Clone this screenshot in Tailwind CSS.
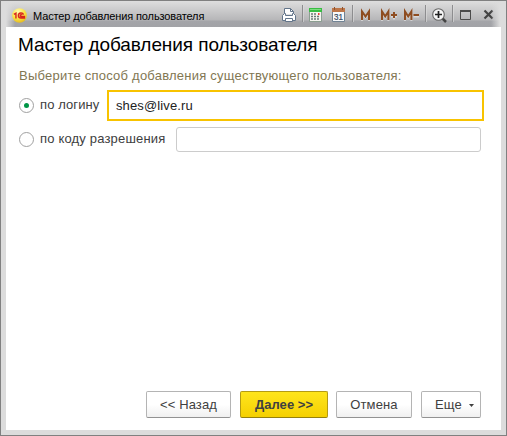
<!DOCTYPE html>
<html lang="ru">
<head>
<meta charset="utf-8">
<title>Мастер добавления пользователя</title>
<script src="https://cdn.jsdelivr.net/npm/@tailwindcss/browser@4"></script>
</head>
<body class="w-[507px] h-[436px] overflow-hidden font-['Liberation_Sans',Arial,sans-serif]">
<div class="w-[507px] h-[436px] border border-[#808080] bg-[#dcdcdc] flex flex-col">
  <header class="h-[26px] shrink-0 flex">
    <div class="w-[14px] bg-linear-to-r from-[#dcdcdc] from-35% to-transparent z-10 -mr-[14px]"></div>
    <div class="flex-1 flex bg-[linear-gradient(to_bottom,#dedede_0,#b6b6b8_19px,#a4a5a9_20px,#a2a3a7_26px)]">
      <svg class="w-[15px] h-[15px] ml-[11px] mt-[7px] shrink-0 relative z-20" viewBox="0 0 16 16">
        <defs><radialGradient id="g" cx=".4" cy=".25" r=".8"><stop offset="0" stop-color="#fffbb0"/><stop offset=".55" stop-color="#fbe447"/><stop offset="1" stop-color="#e2b51c"/></radialGradient></defs>
        <circle cx="8" cy="8" r="7.8" fill="url(#g)"/>
        <path d="M2 6.800 4.200 5.500V11.200M12.300 7C11.700 4.800 6.800 4.600 6.800 8c0 1.900 1.200 2.700 2.800 2.700H14M10.800 7.600C10.200 6.700 8.800 7 8.800 8c0 .7.400 1 1.200 1H14" fill="none" stroke="#d9231c" stroke-width="1.500"/>
      </svg>
      <div class="ml-[6px] mt-[8px] w-[247px] text-[11px] leading-[14px] tracking-[-0.12px] text-black whitespace-nowrap">Мастер добавления пользователя</div>
      <svg class="w-[226px] h-[26px] shrink-0" viewBox="280 1 226 26">
        <g stroke="#8d8d8f"><path d="M302.500 5v17M352.500 5v17M425.500 5v17M452.500 5v17"/></g>
        <g stroke="#dedede" opacity=".6"><path d="M303.500 5v17M353.500 5v17M426.500 5v17M453.500 5v17"/></g>
        <g fill="#fff" stroke="#63758a"><path d="M284.500 14.500V8.500h6l3 3v3"/><path d="M290.500 8.500v3h3" fill="none"/><path d="M282.500 20.500v-5l2-2h1v2h7v-2h1l2 2v5z"/><path d="M285.500 18.500h7v3h-7z"/></g>
        <path d="M310 8h11a1 1 0 0 1 1 1v12a1 1 0 0 1-1 1h-11a1 1 0 0 1-1-1V9a1 1 0 0 1 1-1z" fill="#8b9e91"/><path d="M310 12h11v9h-11z" fill="#f4f5ef"/>
        <path d="M309 8h13v4h-13z" fill="#39bd43"/><path d="M310 9h11v1h-11z" fill="#7ddd80"/>
        <g stroke="#6b7a78" stroke-dasharray="2 1"><path d="M311 14h5M311 16.500h9M311 19h9" stroke-width="1.500"/></g><path d="M318 13h1.500v2H318z" fill="#ef3d34"/>
        <path d="M332.500 9.500h12v12h-12z" fill="#f8f9fa" stroke="#718394"/><path d="M332 8h13v4h-13z" fill="#bd7649"/><path d="M334.500 7v3M342.500 7v3" stroke="#8f532d"/>
        <text x="334" y="20" font-size="9" textLength="9" lengthAdjust="spacingAndGlyphs" fill="#364b60" stroke="#364b60" stroke-width=".2">31</text>
        <g fill="none" stroke="#f0f0f0" opacity=".55" stroke-width="2" transform="translate(0 1)"><path d="M362 20v-8.500l3.500 5 3.500-5V20M382 20v-8.500l3.200 5 3.200-5V20M405 20v-8.500l3.200 5 3.200-5V20M391 15.500h6M394 12.500v6M413.500 15.500h5.500"/></g>
        <g fill="none" stroke="#8e4d21" stroke-width="2"><path d="M362 20v-8.500l3.500 5 3.500-5V20M382 20v-8.500l3.200 5 3.200-5V20M405 20v-8.500l3.200 5 3.200-5V20M391 15h6M394 12v6M413.500 15h5.500"/></g>
        <path d="m442 18 4 4" stroke="#444" stroke-width="2.500"/><circle cx="438.500" cy="14.500" r="5.800" fill="#f5f5f5" stroke="#666" stroke-width="1.100"/><path d="M435 14.500h7M438.500 11v7" stroke="#222" stroke-width="1.700"/>
        <path d="M460.500 11.500h10v8h-10z" fill="none" stroke="#4b4b4b"/><path d="M460 11h11" stroke="#4b4b4b" stroke-width="2"/>
        <path d="m484.500 10.500 8 8m0-8-8 8" stroke="#434343" stroke-width="2.200"/>
      </svg>
    </div>
    <div class="w-[15px] -ml-[15px] bg-linear-to-r from-transparent to-[#dcdcdc] to-60%"></div>
  </header>
  <main class="mx-[5px] mb-[5px] flex-1 bg-white flex flex-col pl-3 pr-[20px]">
    <h1 class="mt-[6px] h-6 leading-6 text-[19px] tracking-[-0.08px] text-black whitespace-nowrap">Мастер добавления пользователя</h1>
    <p class="mt-[11px] ml-px h-4 leading-4 text-[13px] tracking-[0.23px] text-[#827753] whitespace-nowrap">Выберите способ добавления существующего пользователя:</p>
    <label class="mt-[6px] h-[31px] flex -mr-[3px]">
      <span class="mt-[8px] ml-[1px] w-[15px] h-[15px] rounded-full border border-[#a0a0a0] flex items-center justify-center shrink-0"><span class="w-[5px] h-[5px] rounded-full bg-[#009646]"></span></span>
      <span class="ml-[6px] mt-[7px] w-[67px] leading-4 text-[13px] tracking-[0.1px] text-[#404040] whitespace-nowrap">по логину</span>
      <span class="flex-1 border-2 border-[#f8c300] pl-[7px] leading-[27px] text-[13px] tracking-[0.12px] text-[#222]">shes@live.ru</span>
    </label>
    <label class="mt-[6px] h-[25px] flex">
      <span class="mt-[5px] ml-[1px] w-[15px] h-[15px] rounded-full border border-[#a0a0a0] shrink-0"></span>
      <span class="ml-[6px] mt-[4px] w-[136px] leading-4 text-[13px] tracking-[0.18px] text-[#404040] whitespace-nowrap">по коду разрешения</span>
      <span class="flex-1 border border-[#ccc] rounded-[3px]"></span>
    </label>
    <div class="mt-auto mb-[12px] h-[27px] flex justify-end text-[13px] leading-[26px] tracking-[0.12px] text-[#404040] text-center whitespace-nowrap">
      <button class="w-[85px] mr-[9px] rounded-[2px] border border-[#b4b4b4] border-b-[#929292] bg-linear-to-b from-white from-50% to-[#f0f0f0]">&lt;&lt; Назад</button>
      <button class="w-[88px] mr-[8px] rounded-[2px] border border-[#b49b14] border-b-[#94800f] bg-linear-to-b from-[#ffe51b] to-[#f5d000] font-bold tracking-[0.05px]">Далее &gt;&gt;</button>
      <button class="w-[76px] mr-[9px] rounded-[2px] border border-[#b4b4b4] border-b-[#929292] bg-linear-to-b from-white from-50% to-[#f0f0f0]">Отмена</button>
      <button class="w-[60px] rounded-[2px] border border-[#b4b4b4] border-b-[#929292] bg-linear-to-b from-white from-50% to-[#f0f0f0] flex items-center pl-[13px]">Еще<svg class="ml-[7px] mt-[2px] w-[5px] h-[3px]" viewBox="0 0 5 3"><path d="M0 0h5L2.500 3z" fill="#404040"/></svg></button>
    </div>
  </main>
</div>
</body>
</html>
